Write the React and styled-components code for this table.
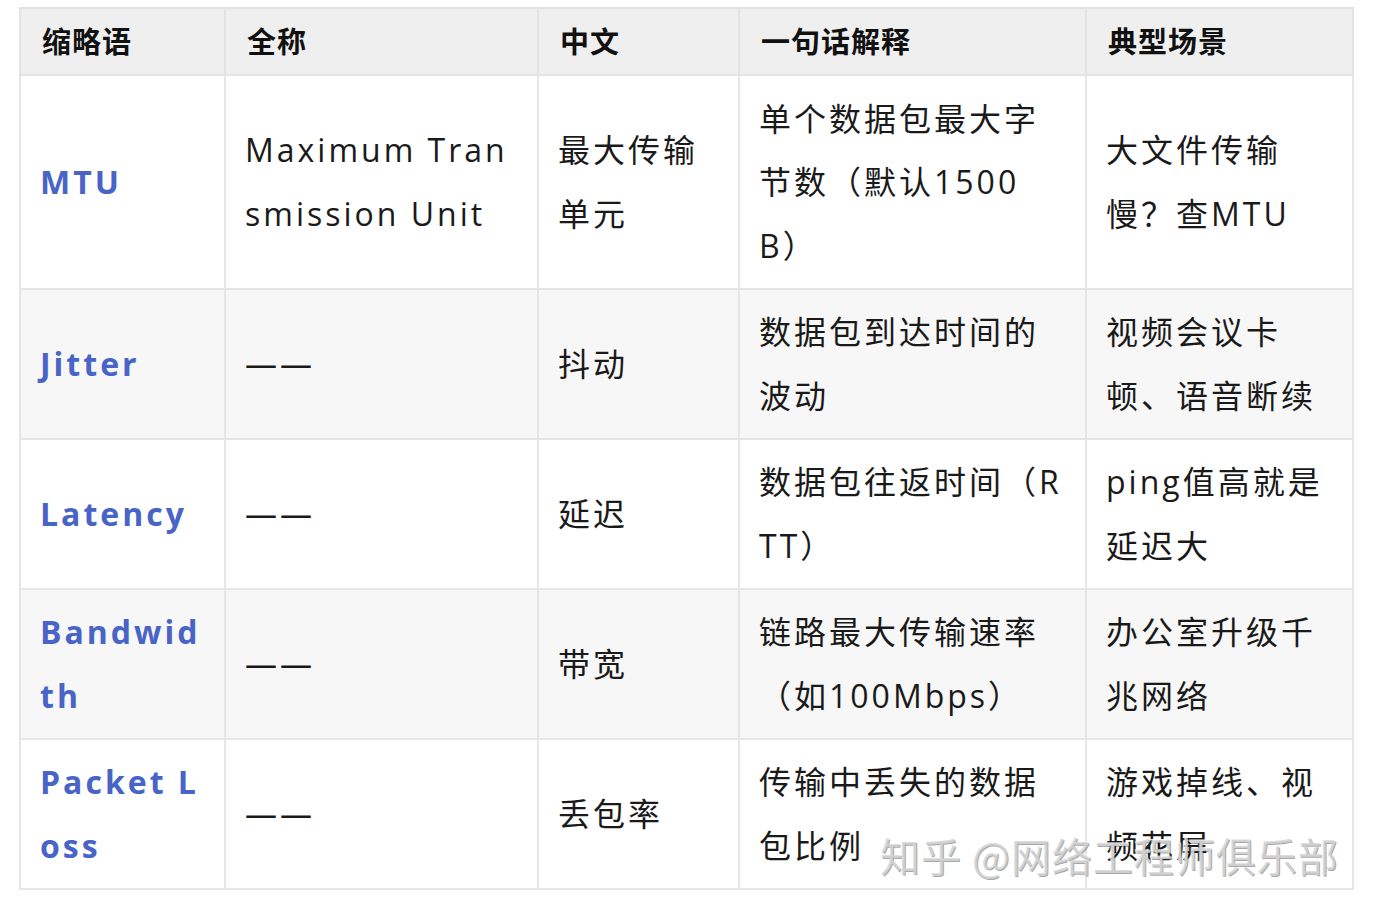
import styled, { createGlobalStyle } from "styled-components"

const GlobalStyle = createGlobalStyle`
    html, body {
        margin: 0;
        padding: 0;
        background: #ffffff;
    }
    body {
        font-family: "Open Sans", "Noto Sans CJK SC", sans-serif;
        color: #1a1a1a;
    }
`

const columns = ["缩略语", "全称", "中文", "一句话解释", "典型场景"]

const rows = [
    {
        abbr: "MTU",
        full: "Maximum Transmission Unit",
        cn: "最大传输单元",
        desc: "单个数据包最大字节数（默认1500B）",
        scene: "大文件传输慢？查MTU",
    },
    {
        abbr: "Jitter",
        full: "——",
        cn: "抖动",
        desc: "数据包到达时间的波动",
        scene: "视频会议卡顿、语音断续",
    },
    {
        abbr: "Latency",
        full: "——",
        cn: "延迟",
        desc: "数据包往返时间（RTT）",
        scene: "ping值高就是延迟大",
    },
    {
        abbr: "Bandwidth",
        full: "——",
        cn: "带宽",
        desc: "链路最大传输速率（如100Mbps）",
        scene: "办公室升级千兆网络",
    },
    {
        abbr: "Packet Loss",
        full: "——",
        cn: "丢包率",
        desc: "传输中丢失的数据包比例",
        scene: "游戏掉线、视频花屏",
    },
]

export default function App() {
    return (
        <Page>
            <GlobalStyle />
            <Table>
                <colgroup>
                    <col style={{ width: 205 }} />
                    <col style={{ width: 313 }} />
                    <col style={{ width: 201 }} />
                    <col style={{ width: 347 }} />
                    <col style={{ width: 267 }} />
                </colgroup>
                <thead>
                    <tr>
                        {columns.map(c => <Th key={c}>{c}</Th>)}
                    </tr>
                </thead>
                <tbody>
                    {rows.map((r, i) => (
                        <Row key={r.abbr} $striped={i % 2 === 1}>
                            <Abbr>{r.abbr}</Abbr>
                            <Td>{r.full}</Td>
                            <Td>{r.cn}</Td>
                            <Td>{r.desc}</Td>
                            <Td>{r.scene}</Td>
                        </Row>
                    ))}
                </tbody>
            </Table>
            <Watermark>知乎 @网络工程师俱乐部</Watermark>
        </Page>
    )
}

const Page = styled.div`
    position: relative;
    width: 1374px;
    height: 912px;
    padding: 7px 0 0 19px;
    box-sizing: border-box;
`

const Table = styled.table`
    border-collapse: collapse;
    table-layout: fixed;
    width: 1334px;
`

const Th = styled.th`
    background: #efefef;
    border: 2px solid #e3e3e3;
    height: 67px;
    padding: 0 21px 4px 21px;
    text-align: left;
    font-family: "Noto Sans CJK SC", sans-serif;
    font-size: 29px;
    font-weight: 700;
    color: #111111;
    letter-spacing: 1px;
    box-sizing: border-box;
`

const Row = styled.tr`
    background: ${p => (p.$striped ? "#f7f7f7" : "#ffffff")};
`

const Td = styled.td`
    border: 2px solid #e6e6e6;
    padding: 10.5px 21px 10.5px 19px;
    font-size: 32px;
    line-height: 63.5px;
    letter-spacing: 3px;
    vertical-align: middle;
    text-align: left;
    word-break: break-all;
    text-spacing-trim: space-all;
    color: #1a1a1a;
`

const Abbr = styled(Td)`
    color: #4864c6;
    font-weight: 700;
    letter-spacing: 3px;
`

const Watermark = styled.div`
    position: absolute;
    left: 880px;
    top: 826px;
    font-family: "Noto Sans CJK SC", sans-serif;
    font-size: 40px;
    letter-spacing: 1px;
    color: rgba(215, 215, 215, 0.85);
    text-shadow: 1px 1px 0 rgba(60, 60, 60, 0.45), -1px -1px 0 rgba(255, 255, 255, 0.6);
    pointer-events: none;
    white-space: nowrap;
`
